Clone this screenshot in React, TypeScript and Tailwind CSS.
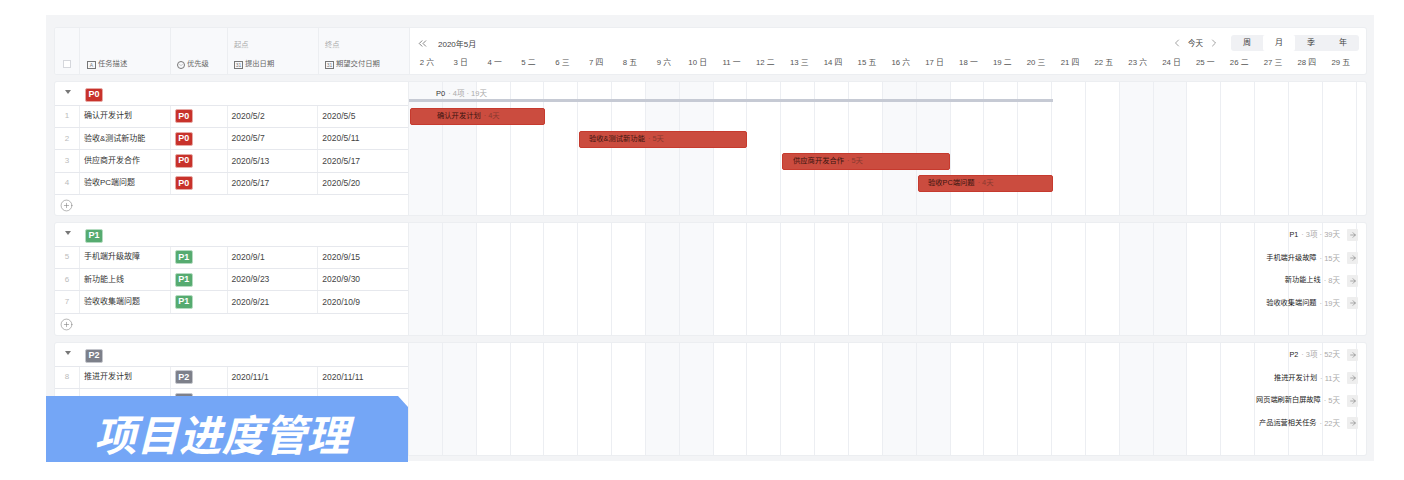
import { ArrowRight, ChevronDown, ChevronLeft, ChevronRight, ChevronsLeft, CirclePlus } from 'lucide-react'

const weekNames = ['六', '日', '一', '二', '三', '四', '五']
const days = Array.from({ length: 28 }, (_, i) => ({
  label: `${i + 2} ${weekNames[i % 7]}`,
  weekend: i % 7 < 2,
}))

const tagColors = {
  P0: 'bg-[#c8322b] border-[#e7a9a5]',
  P1: 'bg-[#56ab70] border-[#b5dcc1]',
  P2: 'bg-[#7d808a] border-[#c4c6cc]',
}

type Priority = keyof typeof tagColors

type Task = {
  id: number
  name: string
  start: string
  end: string
  duration: string
  bar?: string
  barPad?: string
  // row sits under the title banner, its cells show nothing
  covered?: boolean
}

type Group = {
  priority: Priority
  summary: string
  heightClass: string
  tasks: Task[]
}

const groups: Group[] = [
  {
    priority: 'P0',
    summary: '4项 · 19天',
    heightClass: 'h-[133px]',
    tasks: [
      { id: 1, name: '确认开发计划', start: '2020/5/2', end: '2020/5/5', duration: '4天', bar: 'ml-[1px] w-[135px]', barPad: 'pl-[26px]' },
      { id: 2, name: '验收&测试新功能', start: '2020/5/7', end: '2020/5/11', duration: '5天', bar: 'ml-[170px] w-[168px]', barPad: 'pl-[9px]' },
      { id: 3, name: '供应商开发合作', start: '2020/5/13', end: '2020/5/17', duration: '5天', bar: 'ml-[373px] w-[168px]', barPad: 'pl-[10px]' },
      { id: 4, name: '验收PC端问题', start: '2020/5/17', end: '2020/5/20', duration: '4天', bar: 'ml-[509px] w-[135px]', barPad: 'pl-[9px]' },
    ],
  },
  {
    priority: 'P1',
    summary: '3项 · 39天',
    heightClass: 'h-[112px]',
    tasks: [
      { id: 5, name: '手机端升级故障', start: '2020/9/1', end: '2020/9/15', duration: '15天' },
      { id: 6, name: '新功能上线', start: '2020/9/23', end: '2020/9/30', duration: '8天' },
      { id: 7, name: '验收收集端问题', start: '2020/9/21', end: '2020/10/9', duration: '19天' },
    ],
  },
  {
    priority: 'P2',
    summary: '3项 · 52天',
    heightClass: 'h-[112px]',
    tasks: [
      { id: 8, name: '推进开发计划', start: '2020/11/1', end: '2020/11/11', duration: '11天' },
      { id: 9, name: '网页端刷新白屏故障', start: '', end: '', duration: '5天', covered: true },
      { id: 10, name: '产品运营相关任务', start: '', end: '', duration: '22天', covered: true },
    ],
  },
]

function Tag({ priority, blank }: { priority: Priority; blank?: boolean }) {
  return (
    <span
      className={`flex h-[14px] w-[18px] items-center justify-center rounded-[2px] border text-[9px] font-bold leading-none text-white ${tagColors[priority]}`}
    >
      {blank ? '' : priority}
    </span>
  )
}

function BoxIcon({ label }: { label: string }) {
  return (
    <span className="flex h-[8px] w-[9px] items-center justify-center border border-[#777] text-[5px] leading-none text-[#777]">
      {label}
    </span>
  )
}

function DayGrid() {
  return (
    <div className="absolute inset-0 flex">
      {days.map((day) => (
        <div
          key={day.label}
          className={`h-full w-[33.85px] shrink-0 border-r border-[#eceef2] ${day.weekend ? 'bg-[#f8f9fb]' : ''}`}
        />
      ))}
    </div>
  )
}

function OffscreenLabel({ strong, muted }: { strong: string; muted: string }) {
  return (
    <div className="flex h-full items-center justify-end pr-[8px]">
      <span className="text-[7.2px] text-[#222]">{strong}</span>
      <span className="ml-[3px] mr-[7px] text-[7.5px] text-[#aaa]">· {muted}</span>
      <span className="flex h-[12px] w-[11px] items-center justify-center rounded-[1px] bg-[#eeeeee]">
        <ArrowRight size={8} strokeWidth={1.5} className="text-[#666]" />
      </span>
    </div>
  )
}

function GroupPanel({ group }: { group: Group }) {
  const hasBars = group.priority === 'P0'

  return (
    <section className={`flex overflow-hidden rounded-[2px] bg-white ${group.heightClass} shadow-[0_0_0_1px_#eceef1]`}>
      <div className="flex w-[354px] shrink-0 flex-col border-r border-[#eceef1]">
        <div className="flex h-[23.5px] shrink-0 items-center border-b border-[#e6e8ed] pt-[3px]">
          <span className="mb-[5px] ml-[10px] h-0 w-0 border-x-[3px] border-t-[4px] border-x-transparent border-t-[#777]" />
          <span className="ml-[14px]">
            <Tag priority={group.priority} />
          </span>
        </div>
        {group.tasks.map((task) => (
          <div key={task.id} className="flex h-[22.4px] shrink-0 items-center border-b border-[#e6e8ed] text-[8px] text-[#333]">
            <div className="flex h-full w-[25px] items-center justify-center border-r border-[#eceef1] text-[#bbb]">
              {task.id}
            </div>
            <div className="flex h-full w-[91px] items-center border-r border-[#eceef1] pl-[4px]">
              {task.covered ? '' : task.name}
            </div>
            <div className="flex h-full w-[57px] items-center border-r border-[#eceef1] pl-[4px]">
              <Tag priority={group.priority} blank={task.covered} />
            </div>
            <div className="flex h-full w-[91px] items-center border-r border-[#eceef1] pl-[4px] text-[8.5px] text-[#444]">
              {task.start}
            </div>
            <div className="flex h-full w-[90px] items-center pl-[4px] text-[8.5px] text-[#444]">{task.end}</div>
          </div>
        ))}
        <div className="flex flex-1 items-center pl-[5px]">
          <CirclePlus size={13} strokeWidth={1} className="text-[#777]" />
        </div>
      </div>

      <div className="relative flex-1">
        <DayGrid />
        <div className="relative">
          {hasBars ? (
            <div className="h-[23.5px] pt-[7px]">
              <div className="flex h-[9px] items-center pl-[27px] text-[7.5px] leading-none">
                <span className="text-[#333]">P0</span>
                <span className="ml-[3px] text-[#aaa]">· {group.summary}</span>
              </div>
              <div className="mt-[1px] h-[3px] w-[644px] bg-[#c6cad4]" />
            </div>
          ) : (
            <div className="h-[24px]">
              <OffscreenLabel strong={group.priority} muted={group.summary} />
            </div>
          )}
          {group.tasks.map((task) =>
            task.bar ? (
              <div key={task.id} className="flex h-[22.4px] items-center">
                <div
                  className={`flex h-[17px] items-center rounded-[2px] border border-[#c63a2e] bg-[#cb4c3f] text-[7.3px] ${task.bar} ${task.barPad}`}
                >
                  <span className="text-[#3a1510]">{task.name}</span>
                  <span className="ml-[3px] text-[#8a3a30]">· {task.duration}</span>
                </div>
              </div>
            ) : (
              <div key={task.id} className="h-[22.6px]">
                <OffscreenLabel strong={task.name} muted={task.duration} />
              </div>
            )
          )}
        </div>
      </div>
    </section>
  )
}

function TableHeader() {
  return (
    <header className="flex h-[46px] overflow-hidden rounded-[2px] bg-white shadow-[0_0_0_1px_#eceef1]">
      <div className="flex w-[354px] shrink-0 bg-[#f8f9fb] text-[7.3px] text-[#666]">
        <div className="flex w-[25px] items-end justify-center border-r border-[#eceef1] pb-[6px]">
          <span className="h-[8px] w-[8px] border border-[#d5d7dc] bg-white" />
        </div>
        <div className="flex w-[91px] items-end gap-[2px] border-r border-[#eceef1] pb-[5px] pl-[7px]">
          <BoxIcon label="A" />
          <span className="leading-[10px]">任务描述</span>
        </div>
        <div className="flex w-[57px] items-end gap-[2px] border-r border-[#eceef1] pb-[5px] pl-[6px]">
          <span className="flex h-[8px] w-[8px] items-center justify-center rounded-full border border-[#777]">
            <ChevronDown size={6} strokeWidth={1.5} className="text-[#777]" />
          </span>
          <span className="leading-[10px]">优先级</span>
        </div>
        <div className="flex w-[91px] flex-col justify-end border-r border-[#eceef1] pb-[5px] pl-[6px]">
          <span className="mb-[9px] leading-[10px] text-[#aaa]">起点</span>
          <div className="flex items-end gap-[2px]">
            <BoxIcon label="31" />
            <span className="leading-[10px]">提出日期</span>
          </div>
        </div>
        <div className="flex w-[90px] flex-col justify-end pb-[5px] pl-[6px]">
          <span className="mb-[9px] leading-[10px] text-[#aaa]">终点</span>
          <div className="flex items-end gap-[2px]">
            <BoxIcon label="31" />
            <span className="leading-[10px]">期望交付日期</span>
          </div>
        </div>
      </div>

      <div className="flex flex-1 flex-col border-l border-[#eceef1]">
        <div className="flex h-[27px] items-center pl-[6px] pt-[3px] text-[8px] text-[#444]">
          <ChevronsLeft size={13} strokeWidth={1.2} className="text-[#444]" />
          <span className="ml-[9px] mt-[3px]">2020年5月</span>
          <div className="ml-auto flex items-center">
            <ChevronLeft size={12} strokeWidth={1} className="text-[#444]" />
            <span className="mx-[5px] mt-[1px] text-[7.5px]">今天</span>
            <ChevronRight size={12} strokeWidth={1} className="text-[#444]" />
          </div>
          <div className="ml-[11px] mr-[7px] flex h-[16px] w-[128px] rounded-[3px] bg-[#f0f1f4]">
            {['周', '月', '季', '年'].map((range) => (
              <span
                key={range}
                className={`flex h-full w-[32px] items-center justify-center rounded-[2px] ${range === '月' ? 'bg-white' : ''}`}
              >
                {range}
              </span>
            ))}
          </div>
        </div>
        <div className="flex flex-1 items-center pb-[3px] text-[7.8px] text-[#555]">
          {days.map((day) => (
            <span key={day.label} className="w-[33.85px] shrink-0 text-center">
              {day.label}
            </span>
          ))}
        </div>
      </div>
    </header>
  )
}

export default function App() {
  return (
    <div className="relative h-[480px] w-[1404px] overflow-hidden bg-white font-['Liberation_Sans','Noto_Sans_CJK_SC',sans-serif]">
      <main className="ml-[46px] mt-[15px] h-[446px] w-[1328px] overflow-hidden bg-[#f3f4f6] pl-[9px] pr-[8px] pt-[13px]">
        <TableHeader />
        <div className="mt-[8px] flex flex-col gap-[8px]">
          {groups.map((group) => (
            <GroupPanel key={group.priority} group={group} />
          ))}
        </div>
      </main>

      <div className="absolute left-[46px] top-[396px] flex h-[66px] w-[362px] items-center bg-[#74a6f6] pl-[48px] [clip-path:polygon(0_0,352px_0,100%_11px,100%_100%,0_100%)]">
        <span className="pt-[17px] text-[42.5px] font-bold italic leading-none text-white">项目进度管理</span>
      </div>
    </div>
  )
}
